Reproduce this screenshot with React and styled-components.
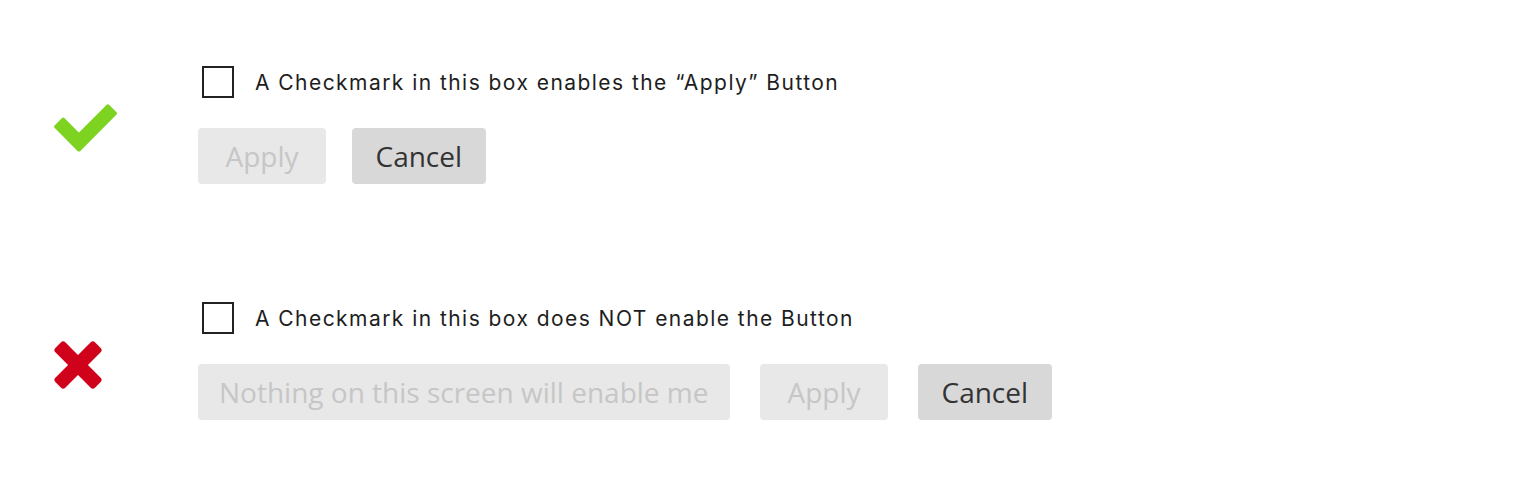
import React from 'react'
import styled, { createGlobalStyle } from 'styled-components'

const GlobalStyle = createGlobalStyle`
  html, body {
    margin: 0;
    padding: 0;
    background: #fff;
  }
`

export default function App () {
  return (
    <Page>
      <GlobalStyle />
      <Section>
        <IconCell offset={2}>
          <CheckIcon />
        </IconCell>
        <Content>
          <CheckRow>
            <Box type='checkbox' />
            <Label>A Checkmark in this box enables the “Apply” Button</Label>
          </CheckRow>
          <ButtonRow gap={26}>
            <Button disabled>Apply</Button>
            <Button>Cancel</Button>
          </ButtonRow>
        </Content>
      </Section>
      <Section>
        <IconCell offset={4}>
          <CrossIcon />
        </IconCell>
        <Content>
          <CheckRow>
            <Box type='checkbox' />
            <Label>A Checkmark in this box does NOT enable the Button</Label>
          </CheckRow>
          <ButtonRow gap={30}>
            <Field disabled placeholder='Nothing on this screen will enable me' />
            <Button disabled>Apply</Button>
            <Button>Cancel</Button>
          </ButtonRow>
        </Content>
      </Section>
    </Page>
  )
}

const CheckIcon = () => (
  <svg width='64' height='50' viewBox='53 101 64 50'>
    <polygon
      points='56.2,125.7 63.2,118.7 78.9,134.3 107.9,105.4 114.9,112.4 78.9,148.5'
      fill='#7ed321'
      stroke='#7ed321'
      strokeWidth='4'
      strokeLinejoin='round'
    />
  </svg>
)

const CrossIcon = () => (
  <svg width='48' height='48' viewBox='0 0 48 48'>
    <g fill='#d0021b'>
      <rect x='-4' y='17' width='56' height='14' rx='3' transform='rotate(45 24 24)' />
      <rect x='-4' y='17' width='56' height='14' rx='3' transform='rotate(-45 24 24)' />
    </g>
  </svg>
)

const Page = styled.div`
  padding: 66px 0 0 54px;
  display: flex;
  flex-direction: column;
  gap: 118px;
`
const Section = styled.div`
  display: flex;
  align-items: center;
`
const IconCell = styled.div`
  width: 144px;
  display: flex;
  margin-top: ${p => p.offset * 2}px;
  svg {
    display: block;
    margin-left: ${p => p.offset === 2 ? -1 : 0}px;
  }
`
const Content = styled.div`
  display: flex;
  flex-direction: column;
  gap: 30px;
`
const CheckRow = styled.label`
  display: flex;
  align-items: center;
  padding-left: 4px;
  gap: 21px;
`
const Box = styled.input`
  appearance: none;
  margin: 0;
  width: 32px;
  height: 32px;
  box-sizing: border-box;
  border: 2px solid #222;
  background: #fff;
`
const Label = styled.span`
  font-family: Inter, "Noto Sans", sans-serif;
  font-size: 21px;
  letter-spacing: 1.45px;
  color: #1e1e1e;
`
const ButtonRow = styled.div`
  display: flex;
  gap: ${p => p.gap}px;
`
const Button = styled.button`
  height: 56px;
  min-width: 128px;
  padding: 0 23.5px;
  border: none;
  border-radius: 4px;
  font-family: "Open Sans", sans-serif;
  font-size: 28px;
  background: #d8d8d8;
  color: #333;
  &:disabled {
    background: #e8e8e8;
    color: #c6c6c6;
  }
`
const Field = styled.input`
  width: 532px;
  height: 56px;
  box-sizing: border-box;
  padding: 0 21px;
  border: none;
  border-radius: 4px;
  background: #e8e8e8;
  font-family: "Open Sans", sans-serif;
  font-size: 28px;
  &::placeholder {
    color: #c6c6c6;
  }
`
